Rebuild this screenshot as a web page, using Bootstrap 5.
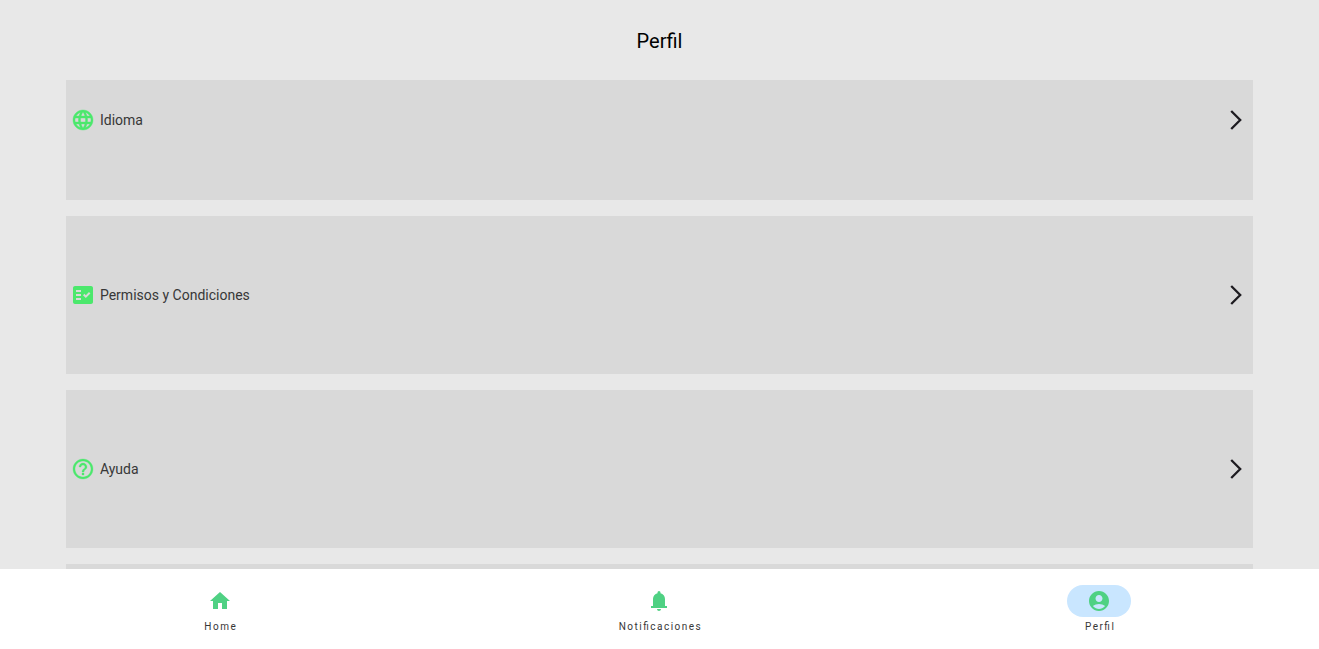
<!DOCTYPE html>
<html lang="es">
<head>
<meta charset="utf-8">
<meta name="viewport" content="width=device-width, initial-scale=1">
<title>Perfil</title>
<link href="https://cdn.jsdelivr.net/npm/bootstrap@5.3.0/dist/css/bootstrap.min.css" rel="stylesheet">
<style>
  body { font-family: Roboto, sans-serif; background: #e8e8e8; }
  .page-title { font-size: 20px; line-height: 24px; color: #000; padding: 29px 0 27px; }
  .options-area { min-height: 0; }
  .options { width: 90%; }
  .option { min-height: 158px; padding: 0 5px; background: #d9d9d9; color: #373737; font-size: 14px; line-height: 20px; }
  .option-short { min-height: 120px; padding-bottom: 40px; }
  .option-mark { fill: #4be86c; stroke: #4be86c; stroke-width: 0; margin-right: 5px; }
  .option-arrow { fill: none; stroke: #1d1b20; stroke-width: 2.3; }
  .tabs { height: 80px; }
  .tab { color: #373737; font-size: 10px; line-height: 14px; letter-spacing: 1.5px; font-feature-settings: "liga" 1; padding-top: 16px; }
  .tab-icon { width: 64px; height: 32px; margin-bottom: 3px; fill: #4fd183; }
  .tab-label { padding-left: 2px; }
  .tab.active .tab-icon { background: #c9e6ff; }
</style>
</head>
<body>
<div class="d-flex flex-column vh-100">
  <main class="options-area flex-grow-1 overflow-hidden">
    <h1 class="page-title text-center fw-normal m-0">Perfil</h1>
    <div class="options d-flex flex-column gap-3 mx-auto">
      <a href="#" class="option option-short d-flex align-items-center text-decoration-none">
        <svg class="option-mark" width="24" height="24" viewBox="0 0 24 24" aria-hidden="true"><path stroke-width=".4" d="M11.99 2C6.47 2 2 6.48 2 12s4.47 10 9.99 10C17.52 22 22 17.52 22 12S17.52 2 11.99 2zm6.93 6h-2.95c-.32-1.25-.78-2.45-1.38-3.56 1.84.63 3.37 1.91 4.33 3.56zM12 4.04c.83 1.2 1.48 2.53 1.91 3.96h-3.82c.43-1.43 1.08-2.76 1.91-3.96zM4.26 14C4.1 13.36 4 12.69 4 12s.1-1.36.26-2h3.38c-.08.66-.14 1.32-.14 2s.06 1.34.14 2H4.26zm.82 2h2.95c.32 1.25.78 2.45 1.38 3.56-1.84-.63-3.37-1.9-4.33-3.56zm2.95-8H5.08c.96-1.66 2.49-2.93 4.33-3.56C8.81 5.55 8.35 6.75 8.03 8zM12 19.96c-.83-1.2-1.48-2.53-1.91-3.96h3.82c-.43 1.43-1.08 2.76-1.91 3.96zM14.34 14H9.66c-.09-.66-.16-1.32-.16-2s.07-1.35.16-2h4.68c.09.65.16 1.32.16 2s-.07 1.34-.16 2zm.25 5.56c.6-1.11 1.06-2.31 1.38-3.56h2.95c-.96 1.65-2.49 2.93-4.33 3.56zM16.36 14c.08-.66.14-1.32.14-2s-.06-1.34-.14-2h3.38c.16.64.26 1.31.26 2s-.1 1.36-.26 2h-3.38z"/></svg>
        <span>Idioma</span>
        <svg class="option-arrow ms-auto" width="24" height="24" viewBox="0 0 24 24" aria-hidden="true"><path d="M7.200 3l9 9-9 9"/></svg>
      </a>
      <a href="#" class="option d-flex align-items-center text-decoration-none">
        <svg class="option-mark" width="24" height="24" viewBox="0 0 24 24" aria-hidden="true"><path d="M20 3H4c-1.100 0-2 .9-2 2v14c0 1.100.9 2 2 2h16c1.100 0 2-.9 2-2V5c0-1.100-.9-2-2-2zM10 17H5v-2h5v2zm0-4H5v-2h5v2zm0-4H5V7h5v2zm4.820 6L12 12.160l1.410-1.410 1.410 1.420L17.990 9l1.420 1.420L14.820 15z" fill-rule="evenodd"/></svg>
        <span>Permisos y Condiciones</span>
        <svg class="option-arrow ms-auto" width="24" height="24" viewBox="0 0 24 24" aria-hidden="true"><path d="M7.200 3l9 9-9 9"/></svg>
      </a>
      <a href="#" class="option d-flex align-items-center text-decoration-none">
        <svg class="option-mark" width="24" height="24" viewBox="0 0 24 24" aria-hidden="true"><path stroke-width=".3" d="M11 18h2v-2h-2v2zm1-16C6.480 2 2 6.480 2 12s4.480 10 10 10 10-4.480 10-10S17.520 2 12 2zm0 18c-4.410 0-8-3.590-8-8s3.590-8 8-8 8 3.590 8 8-3.590 8-8 8zm0-14c-2.210 0-4 1.790-4 4h2c0-1.100.9-2 2-2s2 .9 2 2c0 2-3 1.750-3 5h2c0-2.250 3-2.500 3-5 0-2.210-1.790-4-4-4z"/></svg>
        <span>Ayuda</span>
        <svg class="option-arrow ms-auto" width="24" height="24" viewBox="0 0 24 24" aria-hidden="true"><path d="M7.200 3l9 9-9 9"/></svg>
      </a>
      <div class="option"></div>
    </div>
  </main>
  <nav class="tabs row g-0 bg-white flex-shrink-0" aria-label="Principal">
    <a href="#" class="tab col-4 d-flex flex-column align-items-center text-decoration-none">
      <span class="tab-icon rounded-pill d-flex align-items-center justify-content-center"><svg width="24" height="24" viewBox="0 0 24 24" aria-hidden="true"><path d="M10 20v-6h4v6h5v-8h3L12 3 2 12h3v8z"/></svg></span>
      <span class="tab-label">Home</span>
    </a>
    <a href="#" class="tab col-4 d-flex flex-column align-items-center text-decoration-none">
      <span class="tab-icon rounded-pill d-flex align-items-center justify-content-center"><svg width="24" height="24" viewBox="0 0 24 24" aria-hidden="true"><path d="M4 19v-2h2v-7c0-2.800 1.900-5.200 4.500-5.800v-.7a1.500 1.500 0 0 1 3 0v.7C16.100 4.800 18 7.200 18 10v7h2v2zM12 22c-1.100 0-2-.9-2-2h4c0 1.100-.9 2-2 2z"/></svg></span>
      <span class="tab-label">Notificaciones</span>
    </a>
    <a href="#" class="tab active col-4 d-flex flex-column align-items-center text-decoration-none" aria-current="page">
      <span class="tab-icon rounded-pill d-flex align-items-center justify-content-center"><svg width="24" height="24" viewBox="0 0 24 24" aria-hidden="true"><path d="M12 2C6.480 2 2 6.480 2 12s4.480 10 10 10 10-4.480 10-10S17.520 2 12 2zm0 4c1.930 0 3.500 1.570 3.500 3.500S13.930 13 12 13s-3.500-1.570-3.500-3.500S10.070 6 12 6zm0 14c-2.030 0-4.430-.82-6.140-2.880C7.550 15.800 9.680 15 12 15s4.450.8 6.140 2.120C16.430 19.180 14.030 20 12 20z"/></svg></span>
      <span class="tab-label">Perfil</span>
    </a>
  </nav>
</div>
<script src="https://cdn.jsdelivr.net/npm/bootstrap@5.3.0/dist/js/bootstrap.bundle.min.js"></script>
</body>
</html>
